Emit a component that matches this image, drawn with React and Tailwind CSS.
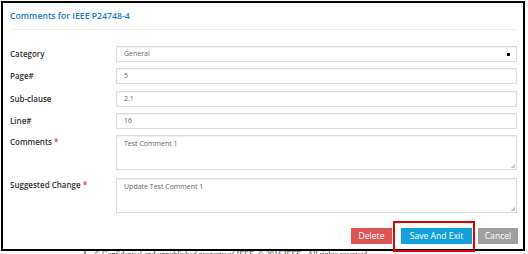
export default function App() {
  const inputCls =
    "h-[16px] w-full border border-[#dcdcdc] bg-white shadow-[inset_0_1px_1px_rgba(0,0,0,0.06)] px-[7px] text-[7px] text-[#666] flex items-center";
  const labelCls = "text-[8px] font-semibold text-[#333] leading-none";
  return (
    <div className="relative w-[528px] h-[254px] overflow-hidden bg-white font-['Open_Sans',sans-serif]">
      <div className="ml-[1px] mt-[1px] w-[524px] h-[250px] border-2 border-black flex flex-col">
        <div className="h-[27px] mx-[7px] border-b border-[#eeeeee] flex items-center">
          <span className="text-[8.7px] font-semibold text-[#2479b5] leading-none mt-[1px]">
            Comments for IEEE P24748-4
          </span>
        </div>
        <div className="pl-[7px] pr-[6px] pt-[16px] grid grid-cols-[106px_1fr] gap-y-[6px]">
          <div className={labelCls + " self-center"}>Category</div>
          <div className={inputCls + " justify-between"}>
            <span>General</span>
            <span className="w-[3px] h-[3px] bg-black mr-[-1px]"></span>
          </div>
          <div className={labelCls + " self-center"}>Page#</div>
          <div className={inputCls}>5</div>
          <div className={labelCls + " self-center"}>Sub-clause</div>
          <div className={inputCls + " mt-[1px]"}>2.1</div>
          <div className={labelCls + " self-center"}>Line#</div>
          <div className={inputCls}>16</div>
          <div className={labelCls + " pt-[3px]"}>
            Comments <span className="text-[#e03a3a]">*</span>
          </div>
          <div className="relative h-[35px] w-full border border-[#dcdcdc] shadow-[inset_0_1px_1px_rgba(0,0,0,0.06)] px-[7px] pt-[4px] text-[7px] text-[#666] leading-none">
            Test Comment 1
            <span className="absolute right-[1px] bottom-[1px] w-[4px] h-[4px] bg-[linear-gradient(135deg,transparent_50%,#ccc_50%)]"></span>
          </div>
          <div className={labelCls + " pt-[3px] mt-[2px]"}>
            Suggested Change <span className="text-[#e03a3a]">*</span>
          </div>
          <div className="relative h-[35px] w-full border border-[#dcdcdc] shadow-[inset_0_1px_1px_rgba(0,0,0,0.06)] px-[7px] pt-[4px] text-[7px] text-[#666] leading-none mt-[2px]">
            Update Test Comment 1
            <span className="absolute right-[1px] bottom-[1px] w-[4px] h-[4px] bg-[linear-gradient(135deg,transparent_50%,#ccc_50%)]"></span>
          </div>
        </div>
        <div className="flex justify-end items-center pr-[5px] mt-[15px]">
          <button className="h-[16px] w-[41px] bg-[#dc5656] text-white text-[8.6px] leading-none">Delete</button>
          <button className="ml-[9px] h-[16px] w-[71px] bg-[#12a1dc] text-white text-[8.6px] leading-none">Save And Exit</button>
          <button className="ml-[6px] h-[16px] w-[40px] bg-[#a0a0a0] text-white text-[8.6px] leading-none">Cancel</button>
        </div>
      </div>
      <div className="absolute left-[393px] top-[221px] w-[82px] h-[31px] border-2 border-[#e10000]"></div>
      <div className="flex items-start ml-[84px]">
        <div className="w-[2px] h-[6px] bg-[#999]"></div>
        <div className="ml-[8px] text-[8px] leading-none text-[#444] font-['Liberation_Serif',serif]">
          © Confidential and unpublished property of IEEE. © 2016 IEEE - All rights reserved.
        </div>
      </div>
    </div>
  );
}
